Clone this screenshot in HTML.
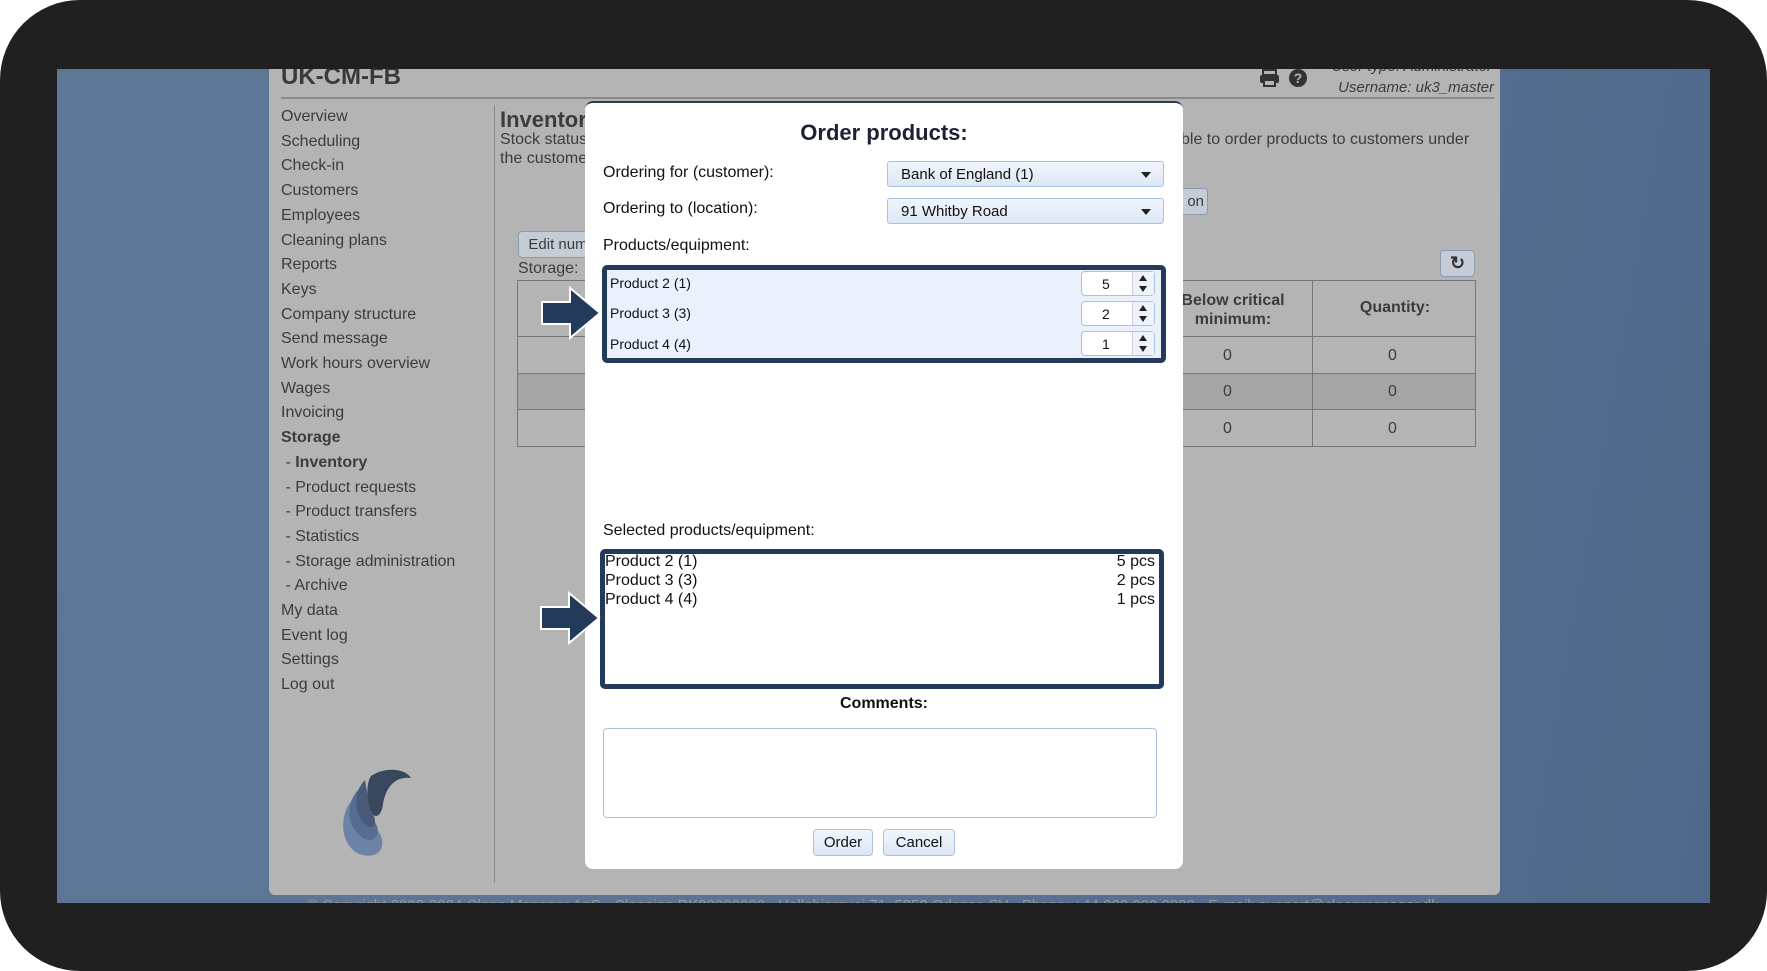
<!DOCTYPE html>
<html><head><meta charset="utf-8"><style>
*{box-sizing:border-box;margin:0;padding:0}
body{width:1767px;height:971px;background:#fff;font-family:"Liberation Sans",sans-serif;position:relative;overflow:hidden}
.frame{position:absolute;left:0;top:0;width:1767px;height:971px;background:#202020;border-radius:80px}
.screen{position:absolute;left:57px;top:69px;width:1653px;height:834px;background:linear-gradient(100deg,#5f7797 0%,#5d7595 40%,#566f90 70%,#4f6889 100%);overflow:hidden}
.page{position:absolute;left:212px;top:-2px;width:1231px;height:828px;background:#b4b4b4;border-radius:0 0 6px 6px}
.a{position:absolute;white-space:nowrap;color:#3c3c3c}
.nav{font-size:16px;line-height:24.7px}
.dlg{position:absolute;left:585px;top:101px;width:598px;height:768px;background:#fff;border-radius:8px;border-top:2px solid #2b3b55}
.lbl{position:absolute;font-size:16px;color:#111}
.sel{position:absolute;left:302px;width:277px;height:26px;border:1px solid #a9c2e4;border-radius:3px;background:linear-gradient(#f0f5fc,#dde8f6);font-size:15px;padding:4px 13px;color:#111}
.sel:after{content:"";position:absolute;right:12px;top:10px;border:5px solid transparent;border-top:6px solid #222;border-bottom:0}
.num{position:absolute;left:474px;width:74px;height:25px;border:1px solid #a9c2e4;border-radius:4px;background:#fff;font-size:14px;color:#111}
.num span{position:absolute;left:20px;top:4px}
.num i{position:absolute;right:0;top:0;width:22px;height:23px;border-left:1px solid #ccd;background:#eef3fa}
.num i:before{content:"";position:absolute;left:6px;top:3px;border:4px solid transparent;border-bottom:6px solid #222;border-top:0}
.num i:after{content:"";position:absolute;left:6px;top:14px;border:4px solid transparent;border-top:6px solid #222;border-bottom:0}
.btn{position:absolute;height:27px;border:1px solid #a9c2e4;border-radius:4px;background:linear-gradient(#f1f6fd,#dce7f5);font-size:15px;text-align:center;line-height:25px;color:#111}
</style></head><body>
<div class="frame"></div>
<div class="screen">
 <div class="page">
  <div class="a" style="left:12px;top:-4px;font-size:24px;font-weight:bold;color:#3a3a3a">UK-CM-FB</div>
  <div style="position:absolute;left:12px;right:6px;top:30px;height:2px;background:#8a8a8a"></div>
  <div class="a" style="right:8px;top:-9px;font-size:15px;font-style:italic">User type: Administrator</div>
  <div class="a" style="right:6px;top:12px;font-size:15px;font-style:italic">Username: uk3_master</div>
  <svg style="position:absolute;left:990px;top:2px" width="22" height="18"><rect x="4" y="1" width="13" height="5" fill="none" stroke="#333" stroke-width="2"/><rect x="1" y="6" width="19" height="8" rx="2" fill="#333"/><rect x="5" y="11" width="11" height="6" fill="#b4b4b4" stroke="#333" stroke-width="2"/></svg>
  <div style="position:absolute;left:1020px;top:2px;width:18px;height:18px;border-radius:50%;background:#333;color:#b4b4b4;font-size:14px;font-weight:bold;text-align:center;line-height:18px">?</div>
  <div class="a nav" style="left:12px;top:38px">Overview<br>Scheduling<br>Check-in<br>Customers<br>Employees<br>Cleaning plans<br>Reports<br>Keys<br>Company structure<br>Send message<br>Work hours overview<br>Wages<br>Invoicing<br><b>Storage</b><br>&nbsp;- <b>Inventory</b><br>&nbsp;- Product requests<br>&nbsp;- Product transfers<br>&nbsp;- Statistics<br>&nbsp;- Storage administration<br>&nbsp;- Archive<br>My data<br>Event log<br>Settings<br>Log out</div>
  <div style="position:absolute;left:225px;top:38px;width:1px;height:778px;background:#8a8a8a"></div>
  <svg style="position:absolute;left:62px;top:697px" width="90" height="95" viewBox="0 0 90 95"><path d="M22 35 C8 50 8 80 28 90 C45 96 55 86 50 72 C45 60 28 58 22 35Z" fill="#6d83a6"/><path d="M28 25 C15 38 14 62 32 74 C44 80 50 70 45 60 C38 48 34 36 28 25Z" fill="#566d92"/><path d="M34 16 C22 28 22 50 36 62 C44 66 46 58 42 50 C38 40 36 28 34 16Z" fill="#48597a"/><path d="M40 12 C55 2 75 5 80 14 C65 12 55 22 52 40 C50 55 42 55 39 45 C35 30 36 18 40 12Z" fill="#38475c"/></svg>
  <div class="a" style="left:231px;top:40px;font-size:22px;font-weight:bold">Inventory</div>
  <div class="a" style="left:231px;top:64px;font-size:16px">Stock status</div>
  <div class="a" style="left:231px;top:83px;font-size:16px">the customers</div>
  <div class="a" style="left:912px;top:64px;font-size:16px">ble to order products to customers under</div>
  <div class="btn" style="left:249px;top:164px;width:80px;color:#3c3c3c;border-color:#8a9ab0;background:#c5ccd6">Edit num</div>
  <div class="btn" style="left:910px;top:121px;width:29px;color:#3c3c3c;border-color:#8a9ab0;background:#c5ccd6;text-align:right;padding-right:3px">on</div>
  <div class="a" style="left:249px;top:193px;font-size:16px">Storage:</div>
  <div class="btn" style="left:1171px;top:183px;width:35px;border-color:#8a9ab0;background:#c5ccd6;font-size:18px;font-weight:bold;color:#333">&#x21bb;</div>
  <div style="position:absolute;left:248px;top:213px;width:959px;height:167px;border:1px solid #777">
   <div style="position:absolute;left:0;right:0;top:0;height:56px;border-bottom:1px solid #777"></div>
   <div style="position:absolute;left:0;right:0;top:92px;height:37px;background:#a5a5a5;border-top:1px solid #777;border-bottom:1px solid #777"></div>
   <div style="position:absolute;left:794px;top:0;bottom:0;width:1px;background:#777"></div>
   <div class="a" style="left:640px;top:10px;width:150px;text-align:center;font-size:16px;font-weight:bold;line-height:19px">Below critical<br>minimum:</div>
   <div class="a" style="left:795px;top:18px;width:164px;text-align:center;font-size:16px;font-weight:bold">Quantity:</div>
   <div class="a" style="left:705px;top:66px;font-size:16px">0</div><div class="a" style="left:870px;top:66px;font-size:16px">0</div>
   <div class="a" style="left:705px;top:102px;font-size:16px">0</div><div class="a" style="left:870px;top:102px;font-size:16px">0</div>
   <div class="a" style="left:705px;top:139px;font-size:16px">0</div><div class="a" style="left:870px;top:139px;font-size:16px">0</div>
  </div>
 </div>
 <div class="a" style="left:250px;top:828px;font-size:15px;color:#999">© Copyright 2008-2024 Clean Manager ApS · Cleaning DK00000000 · Hellebjergvej 71, 5250 Odense SV · Phone: +44 000 000 0000 · E-mail: support@cleanmanager.dk</div>
</div>
<div class="dlg">
 <div class="a" style="left:0;width:598px;text-align:center;top:17px;font-size:22px;font-weight:bold;color:#1a2233">Order products:</div>
 <div class="lbl" style="left:18px;top:61px">Ordering for (customer):</div>
 <div class="lbl" style="left:18px;top:97px">Ordering to (location):</div>
 <div class="lbl" style="left:18px;top:134px">Products/equipment:</div>
 <div class="sel" style="top:58px">Bank of England (1)</div>
 <div class="sel" style="top:95px">91 Whitby Road</div>
 <div style="position:absolute;left:17px;top:162px;width:564px;height:98px;border:5px solid #243a5a;border-radius:5px;background:#eaf1fc">
  <div class="a" style="left:3px;top:5px;font-size:14px;color:#111">Product 2 (1)</div>
  <div class="a" style="left:3px;top:35px;font-size:14px;color:#111">Product 3 (3)</div>
  <div class="a" style="left:3px;top:66px;font-size:14px;color:#111">Product 4 (4)</div>
  <div class="num" style="top:1px"><span>5</span><i></i></div>
  <div class="num" style="top:31px"><span>2</span><i></i></div>
  <div class="num" style="top:61px"><span>1</span><i></i></div>
 </div>
 <div class="lbl" style="left:18px;top:419px">Selected products/equipment:</div>
 <div style="position:absolute;left:15px;top:446px;width:564px;height:140px;border:5px solid #243a5a;border-radius:5px;background:#fff;font-size:16px;line-height:19px;color:#111">
  <div class="a" style="left:0;top:-2px;color:#111">Product 2 (1)<br>Product 3 (3)<br>Product 4 (4)</div>
  <div class="a" style="right:4px;top:-2px;text-align:right;color:#111">5 pcs<br>2 pcs<br>1 pcs</div>
 </div>
 <div class="a" style="left:0;width:598px;text-align:center;top:592px;font-size:16px;font-weight:bold;color:#111">Comments:</div>
 <div style="position:absolute;left:18px;top:625px;width:554px;height:90px;border:1px solid #a9c2e4;border-radius:4px"></div>
 <div class="btn" style="left:228px;top:726px;width:60px">Order</div>
 <div class="btn" style="left:298px;top:726px;width:72px">Cancel</div>
</div>
<svg style="position:absolute;left:540px;top:285px" width="64" height="56"><path d="M2 17 H30 V3 L60 28 L30 53 V39 H2Z" fill="#243a5a" stroke="#fff" stroke-width="2"/></svg>
<svg style="position:absolute;left:539px;top:590px" width="64" height="56"><path d="M2 17 H30 V3 L60 28 L30 53 V39 H2Z" fill="#243a5a" stroke="#fff" stroke-width="2"/></svg>
</body></html>
